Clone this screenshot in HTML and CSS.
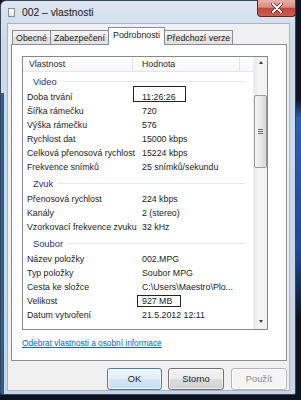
FILE: index.html
```html
<!DOCTYPE html>
<html lang="cs">
<head>
    <meta charset="UTF-8">
    <title>002 – vlastnosti</title>
    <link rel="stylesheet" href="styles.css">
</head>
<body>
    <div class="window">
        <div class="titlebar">
            <span class="doc-icon"></span>
            <span class="title">002 – vlastnosti</span>
            <div class="close">
                <svg width="12" height="10" viewBox="0 0 12 10">
                    <path d="M2 1 L10 9 M10 1 L2 9" stroke="#4a1c18" stroke-width="3.4" stroke-linecap="round"/>
                    <path d="M2 1 L10 9 M10 1 L2 9" stroke="#ffffff" stroke-width="2" stroke-linecap="round"/>
                </svg>
            </div>
        </div>
        <div class="client">
            <div class="tabs">
                <div class="tab tab-1">Obecné</div>
                <div class="tab tab-2">Zabezpečení</div>
                <div class="tab tab-3 active">Podrobnosti</div>
                <div class="tab tab-4">Předchozí verze</div>
            </div>
            <div class="panel">
                <div class="list">
                    <div class="list-body">
                        <div class="head">
                            <span class="h-name">Vlastnost</span>
                            <span class="h-value">Hodnota</span>
                            <span class="h-rest"></span>
                        </div>

                        <div class="group">Video</div>
                        <div class="row"><span class="name">Doba trvání</span><span class="value"><span class="mark mark-time">11:26:26</span></span></div>
                        <div class="row"><span class="name">Šířka rámečku</span><span class="value">720</span></div>
                        <div class="row"><span class="name">Výška rámečku</span><span class="value">576</span></div>
                        <div class="row"><span class="name">Rychlost dat</span><span class="value">15000 kbps</span></div>
                        <div class="row"><span class="name">Celková přenosová rychlost</span><span class="value">15224 kbps</span></div>
                        <div class="row"><span class="name">Frekvence snímků</span><span class="value">25 snímků/sekundu</span></div>

                        <div class="group">Zvuk</div>
                        <div class="row"><span class="name">Přenosová rychlost</span><span class="value">224 kbps</span></div>
                        <div class="row"><span class="name">Kanály</span><span class="value">2 (stereo)</span></div>
                        <div class="row"><span class="name">Vzorkovací frekvence zvuku</span><span class="value">32 kHz</span></div>

                        <div class="group">Soubor</div>
                        <div class="row"><span class="name">Název položky</span><span class="value">002.MPG</span></div>
                        <div class="row"><span class="name">Typ položky</span><span class="value">Soubor MPG</span></div>
                        <div class="row"><span class="name">Cesta ke složce</span><span class="value">C:\Users\Maestro\Plo...</span></div>
                        <div class="row"><span class="name">Velikost</span><span class="value"><span class="mark mark-size">927 MB</span></span></div>
                        <div class="row"><span class="name">Datum vytvoření</span><span class="value">21.5.2012 12:11</span></div>
                    </div>
                    <div class="scrollbar">
                        <div class="sb-btn"><span class="arrow-up"></span></div>
                        <div class="sb-track">
                            <div class="thumb"><span class="grip"></span></div>
                        </div>
                        <div class="sb-btn"><span class="arrow-down"></span></div>
                    </div>
                </div>
                <a class="link" href="#">Odebrat vlastnosti a osobní informace</a>
            </div>
            <div class="buttons">
                <div class="btn btn-default">OK</div>
                <div class="btn">Storno</div>
                <div class="btn btn-disabled">Použít</div>
            </div>
        </div>
    </div>
</body>
</html>
```

FILE: styles.css
```css
* {
    box-sizing: border-box;
}
body {
    margin: 0;
    width: 301px;
    height: 400px;
    overflow: hidden;
    font-family: 'Liberation Sans', Arial, sans-serif;
    color: #1b1b1b;
    background: linear-gradient(#0e1623 0, #0e1623 100px, #2c5fb3 118px, #1f4a92 250px, #0b1320 320px, #0b1320 100%);
}
.window {
    width: 296px;
    height: 395px;
    border: 1px solid #38475a;
    border-radius: 6px 6px 2px 2px;
    background:
        linear-gradient(#2d5aa8, #2d5aa8) 0 92px / 3px 100% no-repeat,
        linear-gradient(#dce6f1, #cddaea 40px, #c8d6e7);
    display: flex;
    flex-direction: column;
}

/* title bar */
.titlebar {
    height: 22px;
    display: flex;
    align-items: center;
    padding-left: 7px;
}
.doc-icon {
    width: 7px;
    height: 9px;
    margin: 1px 7px 0 0;
    border: 1px solid #8a8f96;
    background: linear-gradient(#ffffff, #e4e7ea);
}
.title {
    font-size: 10.3px;
    color: #151515;
    margin-top: 1px;
}
.close {
    margin: -1px -1px 0 auto;
    align-self: flex-start;
    width: 39px;
    height: 17px;
    border: 1px solid #5e2723;
    border-top: none;
    border-radius: 0 0 4px 4px;
    background: linear-gradient(#e6b0a8, #d98d84 45%, #c4473b 52%, #cc5e52);
    display: flex;
    align-items: center;
    justify-content: center;
}

/* dialog body */
.client {
    flex: 1;
    margin: 0 5px 3px 6px;
    padding: 3px 2px 0 3px;
    background: #f0f0f0;
    border: 1px solid #a7b4c4;
}
.tabs {
    height: 17px;
    margin-left: 1px;
    display: flex;
    align-items: flex-end;
    font-size: 8.8px;
}
.tab {
    height: 14px;
    margin-left: -1px;
    border: 1px solid #898c95;
    border-bottom: none;
    background: linear-gradient(#f3f3f3, #ebebeb 50%, #dedede 50%, #e4e4e4);
    display: flex;
    align-items: center;
    justify-content: center;
    color: #1b1b1b;
}
.tab-1 { width: 39px; margin-left: 0; }
.tab-2 { width: 59px; }
.tab-3 { width: 57px; }
.tab-4 { width: 69px; }
.tab.active {
    height: 18px;
    margin-bottom: -1px;
    background: #ffffff;
    position: relative;
    z-index: 1;
    padding-bottom: 3px;
}
.panel {
    height: 317px;
    padding: 11px 18px 0 10px;
    background: #ffffff;
    border: 1px solid #898c95;
}

/* details list */
.list {
    width: 246px;
    height: 274px;
    border: 1px solid #828790;
    display: flex;
    overflow: hidden;
}
.list-body {
    flex: 1;
    overflow: hidden;
}
.head {
    height: 15px;
    display: flex;
    font-size: 8.8px;
    color: #2b2b2b;
    background: linear-gradient(#ffffff, #f6f7f9);
    border-bottom: 1px solid #e5e6ea;
}
.head span {
    display: flex;
    align-items: center;
}
.h-name {
    width: 110px;
    padding-left: 6px;
    border-right: 1px solid #e3e4e9;
}
.h-value {
    width: 107px;
    padding-left: 9px;
    border-right: 1px solid #e3e4e9;
}
.h-rest {
    flex: 1;
}
.group {
    height: 18px;
    padding: 1px 8px 0 10px;
    display: flex;
    align-items: center;
    font-size: 9.3px;
    color: #1e3287;
}
.group::after {
    content: "";
    flex: 1;
    height: 1px;
    margin-left: 5px;
    background: #e2e7ee;
}
.row {
    height: 14px;
    padding-left: 4px;
    display: flex;
    align-items: center;
    font-size: 8.8px;
    white-space: nowrap;
}
.name {
    width: 115px;
}
.mark {
    position: relative;
}
.mark::after {
    content: "";
    position: absolute;
    border: 1px solid #222222;
}
.mark-time::after {
    left: -9px;
    right: -10px;
    top: -6px;
    bottom: 0;
}
.mark-size::after {
    left: -5px;
    right: -9px;
    top: -1px;
    bottom: -1px;
}

/* scrollbar */
.scrollbar {
    width: 14px;
    display: flex;
    flex-direction: column;
    background: linear-gradient(to right, #e9e9e9, #f5f5f5 40%, #f1f1f1);
    border-left: 1px solid #ededed;
}
.sb-btn {
    height: 16px;
    display: flex;
    align-items: center;
    justify-content: center;
}
.arrow-up {
    width: 0;
    height: 0;
    margin-top: -5px;
    border-left: 2.5px solid transparent;
    border-right: 2.5px solid transparent;
    border-bottom: 3px solid #3d3d3d;
}
.arrow-down {
    width: 0;
    height: 0;
    border-left: 2.5px solid transparent;
    border-right: 2.5px solid transparent;
    border-top: 3px solid #3d3d3d;
}
.sb-track {
    flex: 1;
}
.thumb {
    height: 73px;
    margin: 22px 0 0 0;
    border: 1px solid #9b9b9b;
    border-radius: 2px;
    background: linear-gradient(to right, #f4f4f4, #e9e9e9 50%, #d8d8d8);
    display: flex;
    align-items: center;
    justify-content: center;
}
.grip {
    width: 5px;
    height: 5px;
    background: repeating-linear-gradient(#6b6b6b 0 1px, transparent 1px 2px);
}

.link {
    display: block;
    margin-top: 8px;
    font-size: 8.3px;
    line-height: 10px;
    color: #0a64c8;
    text-decoration: underline;
}

/* buttons */
.buttons {
    margin-top: 7px;
    display: flex;
    justify-content: flex-end;
    gap: 6px;
}
.btn {
    width: 56px;
    height: 22px;
    border: 1px solid #707070;
    border-radius: 3px;
    background: linear-gradient(#f3f3f3, #ebebeb 50%, #dddddd 50%, #d0d0d0);
    box-shadow: inset 0 0 0 1px rgba(255, 255, 255, 0.7);
    display: flex;
    align-items: center;
    justify-content: center;
    font-size: 9.3px;
    color: #1b1b1b;
}
.btn-default {
    width: 55px;
    border-color: #3c7fb1;
    background: linear-gradient(#eef6fc, #e2eff9 50%, #d2e6f5 50%, #c6dff2);
}
.btn-disabled {
    margin-left: 1px;
    border-color: #b2b6b9;
    background: #f4f4f4;
    color: #8d8d8d;
}
```
